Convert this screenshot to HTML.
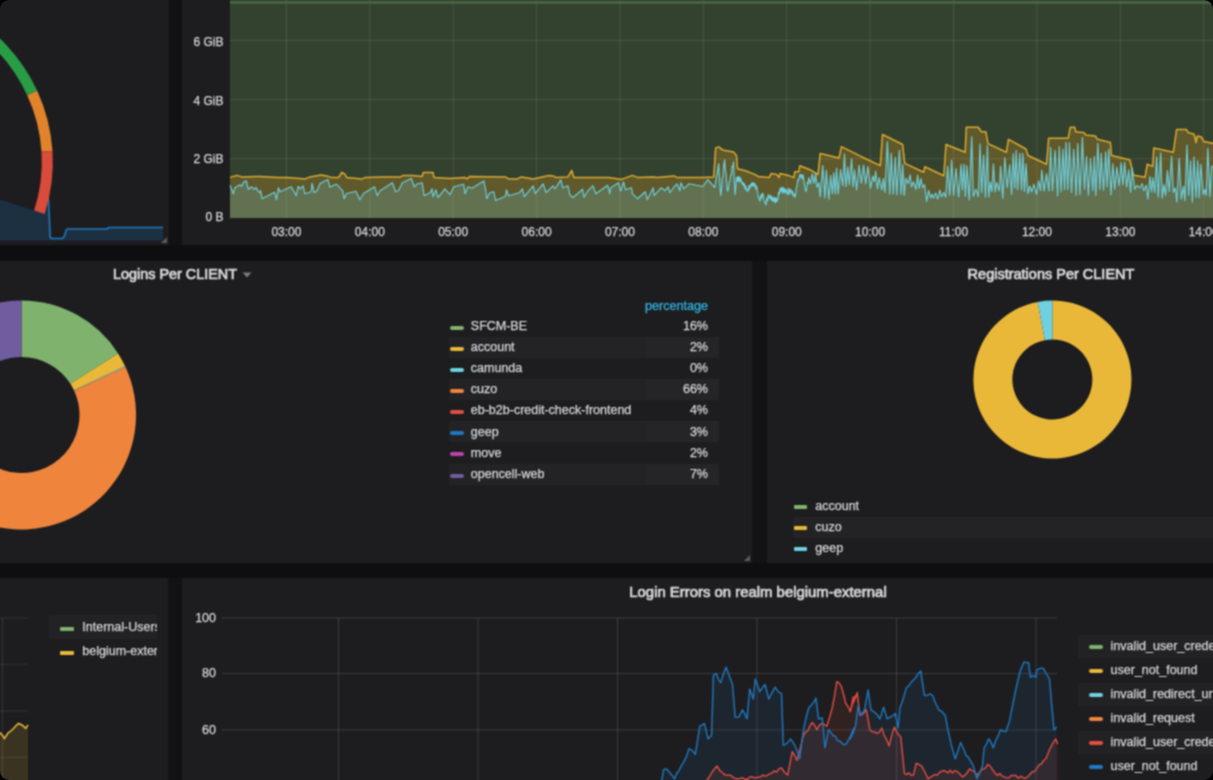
<!DOCTYPE html><html><head><meta charset="utf-8"><style>
html,body{margin:0;padding:0;background:#000;}
#o{position:absolute;left:0;top:0;width:1213px;height:780px;border-radius:9px;overflow:hidden;}
#c{position:absolute;left:0;top:0;width:1213px;height:780px;background:#0e0e10;overflow:hidden;font-family:'Liberation Sans',sans-serif;color:#d8d9da;filter:url(#bl);}
.p{position:absolute;background:#1d1d1f;}
.t{position:absolute;white-space:nowrap;-webkit-text-stroke:0.25px currentColor;}
svg{position:absolute;left:0;top:0;}
</style></head><body><svg width="0" height="0" style="position:absolute"><filter id="bl" x="0" y="0" width="1213" height="780" color-interpolation-filters="sRGB" filterUnits="userSpaceOnUse"><feConvolveMatrix order="3" kernelMatrix="1 2 1 2 4 2 1 2 1" divisor="16" edgeMode="duplicate"/></filter></svg><div id="o"><div id="c">
<div class="p" style="background:#121214;left:169px;top:-10px;width:13px;height:255px"></div>
<div class="p" style="background:#121214;left:752px;top:261px;width:15px;height:302px"></div>
<div class="p" style="background:#121214;left:168px;top:578px;width:14px;height:212px"></div>
<div class="p" style="left:0px;top:-10px;width:169px;height:255px"></div>
<div class="p" style="left:182px;top:-10px;width:1041px;height:255px"></div>
<div class="p" style="left:-10px;top:261px;width:762px;height:302px"></div>
<div class="p" style="left:767px;top:261px;width:456px;height:302px"></div>
<div class="p" style="left:-10px;top:578px;width:178px;height:212px"></div>
<div class="p" style="left:182px;top:578px;width:1041px;height:212px"></div>
<svg width="1213" height="780" viewBox="0 0 1213 780"><polygon points="0,194.5 47,194.5 48.5,200 50.2,237.5 51.5,238.5 62.5,238.5 64.5,236 66.5,229.5 68,229 107,229 109,227.5 163,227.5 163,240.5 0,240.5" fill="#1f78c1" fill-opacity="0.22"/><polyline points="0,194.5 47,194.5 48.5,200 50.2,237.5 51.5,238.5 62.5,238.5 64.5,236 66.5,229.5 68,229 107,229 109,227.5 163,227.5" fill="none" stroke="#1f78c1" stroke-width="1.6" stroke-linejoin="round"/><path d="M-117.7,161.9 L-117.7,2.4 A159.5,159.5 0 0 1 34.2,210.7 Z" fill="#1d1d1f"/><path d="M-146.4,-0.6 A165.0,165.0 0 0 1 32.2,93" fill="none" stroke="#299c46" stroke-width="11"/><path d="M32.2,93 A165.0,165.0 0 0 1 47,151.4" fill="none" stroke="#e0832a" stroke-width="11"/><path d="M47,151.4 A165.0,165.0 0 0 1 39.4,212.3" fill="none" stroke="#d94b3a" stroke-width="11"/><path d="M167,243 l0,-6 l-6,6 z" fill="#5c5c5e"/><path d="M750,561 l0,-6 l-6,6 z" fill="#5c5c5e"/><rect x="230" y="-10" width="993" height="228" fill="#33412f"/><line x1="286.4" y1="-10" x2="286.4" y2="218" stroke="#ffffff" stroke-opacity="0.11" stroke-width="1"/><line x1="369.8" y1="-10" x2="369.8" y2="218" stroke="#ffffff" stroke-opacity="0.11" stroke-width="1"/><line x1="453.2" y1="-10" x2="453.2" y2="218" stroke="#ffffff" stroke-opacity="0.11" stroke-width="1"/><line x1="536.6" y1="-10" x2="536.6" y2="218" stroke="#ffffff" stroke-opacity="0.11" stroke-width="1"/><line x1="620" y1="-10" x2="620" y2="218" stroke="#ffffff" stroke-opacity="0.11" stroke-width="1"/><line x1="703.3" y1="-10" x2="703.3" y2="218" stroke="#ffffff" stroke-opacity="0.11" stroke-width="1"/><line x1="786.7" y1="-10" x2="786.7" y2="218" stroke="#ffffff" stroke-opacity="0.11" stroke-width="1"/><line x1="870.1" y1="-10" x2="870.1" y2="218" stroke="#ffffff" stroke-opacity="0.11" stroke-width="1"/><line x1="953.5" y1="-10" x2="953.5" y2="218" stroke="#ffffff" stroke-opacity="0.11" stroke-width="1"/><line x1="1036.9" y1="-10" x2="1036.9" y2="218" stroke="#ffffff" stroke-opacity="0.11" stroke-width="1"/><line x1="1120.3" y1="-10" x2="1120.3" y2="218" stroke="#ffffff" stroke-opacity="0.11" stroke-width="1"/><line x1="1203.7" y1="-10" x2="1203.7" y2="218" stroke="#ffffff" stroke-opacity="0.11" stroke-width="1"/><line x1="230" y1="40.5" x2="1213" y2="40.5" stroke="#ffffff" stroke-opacity="0.11" stroke-width="1"/><line x1="230" y1="99.6" x2="1213" y2="99.6" stroke="#ffffff" stroke-opacity="0.11" stroke-width="1"/><line x1="230" y1="158.8" x2="1213" y2="158.8" stroke="#ffffff" stroke-opacity="0.11" stroke-width="1"/><line x1="230" y1="2.5" x2="1213" y2="2.5" stroke="#4f7047" stroke-width="2"/><polygon points="230,177.4 236.9,175.4 241.8,176.9 260.6,176.4 277.5,177.4 287.3,177.4 305.2,178.9 310.1,176.9 321,174.9 326.9,175.9 330.9,177.4 338.8,177.4 341.7,172.5 344.7,173.9 346.7,177.4 347,177.4 361.8,178.9 365.8,177.4 380.6,176.9 400.4,176.9 403.4,175.4 412.3,175.4 422.2,176.4 423.2,172.5 433,172.5 434,177.4 449.9,178.4 464.7,177.4 467,178.9 469.9,176.4 505.5,176.9 508.5,178.9 517.4,178.9 521.4,176.9 533.2,178.9 549.1,175.4 553,175.9 556,177.4 567.9,176.9 571.8,170.5 573.8,177.4 582.7,177.4 584,177.4 608.7,177.4 621.6,179.4 632.4,175.4 637.4,177.4 653.2,176.9 657.2,177.4 674,175.9 677,177.4 702,177.4 713.7,177.1 715.7,147.9 718.7,146.9 722.6,149.9 733.5,151.9 736.5,155.8 737.5,168.7 745.4,170.7 755.3,174.6 758.2,176.6 769.1,177.6 771.1,173.6 777,174.6 779,177.6 780,173.6 788.9,175.6 793.9,177.6 794.8,171.7 798.8,171.7 799.8,165.7 810,169.7 818,174.5 820.2,153.4 839.1,157.9 841.4,146.7 861.4,156.7 880.3,165.6 882.5,134.5 902.6,144.5 904.8,163.4 923.7,172.3 924.8,166.8 943.8,175.7 946,144.5 965.2,152.3 966.3,127.3 978.2,127.3 981.4,131.7 985.8,131.7 988,143.6 1006.4,152.3 1008.5,139.3 1025.9,149 1028.1,155.5 1046.5,164.2 1048.7,138.2 1068.2,138.2 1070.3,127.3 1074.7,127.3 1075.8,131.7 1084.4,132.8 1085.5,134.9 1095.3,136 1097.4,139.3 1110.4,142.5 1111.5,155.5 1130,159.9 1133.2,175 1145.1,177.2 1147.3,164.2 1152.7,166.4 1153.8,147.9 1173.3,152.3 1176.6,129.5 1186.3,129.5 1188.5,132.8 1193.9,133.9 1196.1,142.5 1197.2,136 1201.5,137.1 1203.7,141.4 1214,143.6 1214,218 230,218" fill="#f0a820" fill-opacity="0.24"/><polygon points="230,185.3 233.4,193.7 234.9,187.8 239.9,184.8 241.8,186.3 243.8,181.8 246.3,180.9 248.3,189.3 251.7,186.8 254.2,189.3 256.2,187.3 257.7,190.7 259.7,192.7 260.6,190.7 262.1,198.7 274.5,192.2 276.5,199.7 278.4,187.8 279.9,191.7 291.3,186.8 296.2,195.7 298.2,186.3 300.2,188.8 303.2,185.8 304.7,193.7 311.1,191.7 312.1,183.3 314.1,192.7 317,190.7 320,183.8 323.9,181.4 327.9,179.4 329.9,187.3 332.8,185.8 335.8,184.3 337.8,185.3 339.8,187.8 342.7,190.7 344.2,198.7 346,194.7 346.2,193.7 355.9,191.2 359.8,199.7 363.8,193.2 374.7,186.8 377.2,195.7 380.1,190.7 392.5,182.8 395.5,191.7 398.4,190.7 402.4,182.8 411.3,178.4 414.2,186.8 417.2,183.8 422.2,182.8 424.1,195.7 430.1,192.7 432.1,188.8 433,196.7 436,189.8 438,197.7 444.9,188.8 449.9,194.7 453.8,186.8 463.7,184.3 465,193.7 468,186.8 471.9,188.3 483.8,180.9 485.8,190.7 486.7,198.7 489.7,192.7 493.7,191.7 495.7,200.6 505.5,196.2 506.5,189.8 508.5,195.7 519.4,192.7 522.4,188.8 524.3,196.7 533.2,185.8 535.2,193.7 543.1,183.8 546.1,192.7 553,185.8 555,188.8 560.9,179.9 562.9,187.8 567.9,185.8 569.8,194.7 572.8,197.7 582.7,189.3 584,197.2 587.9,190.7 592.9,185.8 595.8,193.7 607.7,185.3 609.7,193.7 610.7,187.8 618.6,182.8 620.6,191.2 623.5,181.8 625.5,189.8 631.5,187.8 632.4,193.7 637.4,198.7 645.3,191.7 647.3,199.7 653.2,187.8 654.2,195.7 661.1,187.8 665.1,190.7 668.1,186.8 670,192.7 674,186.8 677,183.8 679.9,190.7 680.9,182.8 683.9,188.8 688.8,183.8 702.9,186.5 707.8,179.6 714.7,187.5 718.7,163.7 719.7,181.5 720.7,195.4 721.5,189.8 722.2,178.6 723,175.4 723.8,164.6 724.6,159.8 725.4,169.7 726.1,174.2 726.8,185.8 727.6,191.4 728.3,189.1 729.1,181.9 729.8,181.7 730.6,175.1 731.3,175 732,166.3 732.8,167 733.5,161.8 734.3,179.8 735,194.4 735.7,188.5 736.5,177.6 737.2,181.3 737.9,176.3 738.6,181.3 739.3,176.7 740,181.8 740.7,178 741.4,181.5 742.2,184.4 742.9,182 743.7,186 744.4,183.6 745.1,189.3 745.9,185.9 746.6,190.9 747.4,189.5 748.1,191.1 748.9,185.7 749.6,189.2 750.3,184.6 751.1,186.5 751.8,182.6 752.6,186 753.3,182.5 754.1,186 754.9,183.4 755.7,189.1 756.5,185.9 757.3,189.5 758.2,196.3 759.2,199.3 760,201.2 760.8,194.7 761.6,198.1 762.4,193 763.2,194.4 764.2,201.1 765.2,203.3 766,204.9 766.8,197.9 767.5,201 768.3,194.6 769.1,196.4 769.8,198.3 770.6,195.2 771.3,200.5 772,196.6 772.7,200.8 773.4,197.7 774.2,202.1 774.9,197.2 775.6,202.8 776.3,197.9 777,201.3 777.8,200 778.5,192.3 779.3,194.1 780,188.5 780.8,191.3 781.5,187.2 782.3,192.7 783.1,187.1 783.9,192.9 784.6,188.5 785.4,192.9 786.2,189.4 786.9,192.4 787.7,194.6 788.5,188.4 789.3,194.1 790.1,189 790.9,190.4 791.7,193.9 792.5,190.7 793.3,195.9 794.1,193.8 794.8,197.4 795.6,194.5 796.3,187 797.1,185.4 797.8,179.6 798.8,179.8 799.8,174.6 800.6,176.9 801.4,174.4 802.2,179 803,174.8 803.7,178.6 804.7,186.4 805.7,191.4 806.5,190.1 807.2,182.2 808,184 808.7,177.6 810.5,183.9 812.3,173.9 814.1,183.4 815.6,173.6 817.2,187.4 818.9,182.7 820.2,196.6 822.7,165.5 824.9,197.9 826.3,170.4 828.8,199.3 830.6,175.4 832.4,193.7 833.8,172.5 835.3,193.9 836.6,168.4 838.1,193.9 840.6,169.5 842.7,185.7 844.5,154.1 845.9,186.5 847.8,166.9 849.3,184.7 851.6,158.8 853.1,186.6 854.6,169.8 856.6,190 859.1,165.2 861.3,183.3 863.6,165.1 865.6,183.6 867.9,166.6 870.5,188.1 872.8,176.1 874.4,181.6 875.7,171.1 877.4,188.8 879.2,177.6 881.8,190 883.3,178.5 884.9,192.3 887.4,141.8 889.8,194.1 891.2,153.2 893.4,194 895.3,157.6 896.8,194.7 899.4,150.3 901.2,194.5 902.7,164.7 904.2,195.4 905.7,178.2 908,183.6 910.1,174.9 911.5,186.9 913.5,181.7 916,189.5 917.6,175.1 919.2,188.4 920.9,178.6 922.7,187.5 924.6,184.7 926.7,201.5 928.6,190.3 930.6,197.8 932.1,194.1 933.5,198.2 935.7,192.9 937.7,199.1 940,190 941.5,197 943.8,192.6 945.7,197.3 947.6,166.3 949.7,195.3 951.6,160.2 953.6,195.2 956,168.6 958.6,196.9 961,164.6 962.4,189.8 964,164.2 965.4,196.2 966.9,165.5 969.2,199.9 971.7,136.7 973.3,196.6 975.9,189.1 978.3,196.6 980,143.8 981.6,192.4 983.6,155 985.5,197.1 987.4,145.7 988.8,196.9 990.3,182 991.9,191.6 993.4,163.9 995.2,191.8 996.7,182.4 999.2,190.9 1000.6,166.1 1002.8,198.1 1004.9,157.7 1007.2,187.5 1009.7,164.8 1011.6,194.4 1013.2,153.9 1014.7,187.9 1016.2,150.6 1017.5,189.4 1019.8,153.3 1021.5,189.8 1022.8,153.4 1024.5,191.4 1026,163.9 1027.9,193.6 1029.8,186 1031.7,191.8 1033.9,184.2 1036.5,194.4 1038.6,180.8 1040.5,190.7 1041.8,170.2 1044.1,191.1 1046.5,173.7 1048.9,190.8 1050.6,147.3 1052.5,190.6 1055.1,150.2 1057.6,195.8 1059.3,146.6 1061.1,191.6 1063,149.1 1064.6,189.6 1066,142.3 1067.8,189.6 1069.4,142.6 1071.5,192.4 1073.7,149.3 1076.2,195.3 1077.7,143.6 1079.9,194.4 1082.4,137.3 1084.5,189.2 1086.5,156.5 1088.4,195 1090.5,158.5 1092.9,190.5 1094.3,156.4 1095.8,195.6 1097.8,143.2 1099.9,189.3 1101.2,153.4 1103.5,190.2 1105.7,151.9 1107.1,187 1108.7,149.2 1111,194.8 1112.9,163.7 1114.7,189.5 1116.8,167.1 1119,185.8 1121.2,162.7 1122.9,184.7 1124.6,162.3 1126.7,186.9 1128.7,169.9 1130.6,192.1 1132.2,168 1134.7,189.1 1137.1,185.3 1139.7,187.8 1142.2,183.7 1143.8,190.8 1146.3,185.3 1147.8,199 1150,176.5 1151.6,191.9 1152.9,177.7 1154.8,192.6 1156.6,157 1158.3,197.2 1160.7,152.9 1162.2,198.2 1163.8,184.5 1165.6,195.4 1167.4,170.5 1169.2,191.3 1171.6,156.2 1173.3,192.3 1175.3,187.9 1176.8,202 1179.2,158.4 1181.3,199.1 1183.5,186.3 1184.9,200.6 1187,145.2 1188.7,195.4 1190.6,160.9 1192.4,201.9 1194,156.8 1196.1,197.1 1197.7,160.7 1199.2,197.8 1200.8,164.1 1203.2,194.7 1204.8,189.5 1206.2,195.3 1207.8,148.3 1209.9,196.5 1211.7,166.2 1214,166.2 1214,218 230,218" fill="#6ed0e0" fill-opacity="0.2"/><polyline points="230,177.4 236.9,175.4 241.8,176.9 260.6,176.4 277.5,177.4 287.3,177.4 305.2,178.9 310.1,176.9 321,174.9 326.9,175.9 330.9,177.4 338.8,177.4 341.7,172.5 344.7,173.9 346.7,177.4 347,177.4 361.8,178.9 365.8,177.4 380.6,176.9 400.4,176.9 403.4,175.4 412.3,175.4 422.2,176.4 423.2,172.5 433,172.5 434,177.4 449.9,178.4 464.7,177.4 467,178.9 469.9,176.4 505.5,176.9 508.5,178.9 517.4,178.9 521.4,176.9 533.2,178.9 549.1,175.4 553,175.9 556,177.4 567.9,176.9 571.8,170.5 573.8,177.4 582.7,177.4 584,177.4 608.7,177.4 621.6,179.4 632.4,175.4 637.4,177.4 653.2,176.9 657.2,177.4 674,175.9 677,177.4 702,177.4 713.7,177.1 715.7,147.9 718.7,146.9 722.6,149.9 733.5,151.9 736.5,155.8 737.5,168.7 745.4,170.7 755.3,174.6 758.2,176.6 769.1,177.6 771.1,173.6 777,174.6 779,177.6 780,173.6 788.9,175.6 793.9,177.6 794.8,171.7 798.8,171.7 799.8,165.7 810,169.7 818,174.5 820.2,153.4 839.1,157.9 841.4,146.7 861.4,156.7 880.3,165.6 882.5,134.5 902.6,144.5 904.8,163.4 923.7,172.3 924.8,166.8 943.8,175.7 946,144.5 965.2,152.3 966.3,127.3 978.2,127.3 981.4,131.7 985.8,131.7 988,143.6 1006.4,152.3 1008.5,139.3 1025.9,149 1028.1,155.5 1046.5,164.2 1048.7,138.2 1068.2,138.2 1070.3,127.3 1074.7,127.3 1075.8,131.7 1084.4,132.8 1085.5,134.9 1095.3,136 1097.4,139.3 1110.4,142.5 1111.5,155.5 1130,159.9 1133.2,175 1145.1,177.2 1147.3,164.2 1152.7,166.4 1153.8,147.9 1173.3,152.3 1176.6,129.5 1186.3,129.5 1188.5,132.8 1193.9,133.9 1196.1,142.5 1197.2,136 1201.5,137.1 1203.7,141.4 1214,143.6" fill="none" stroke="#dcaa30" stroke-width="1.5" stroke-linejoin="round"/><polyline points="230,185.3 233.4,193.7 234.9,187.8 239.9,184.8 241.8,186.3 243.8,181.8 246.3,180.9 248.3,189.3 251.7,186.8 254.2,189.3 256.2,187.3 257.7,190.7 259.7,192.7 260.6,190.7 262.1,198.7 274.5,192.2 276.5,199.7 278.4,187.8 279.9,191.7 291.3,186.8 296.2,195.7 298.2,186.3 300.2,188.8 303.2,185.8 304.7,193.7 311.1,191.7 312.1,183.3 314.1,192.7 317,190.7 320,183.8 323.9,181.4 327.9,179.4 329.9,187.3 332.8,185.8 335.8,184.3 337.8,185.3 339.8,187.8 342.7,190.7 344.2,198.7 346,194.7 346.2,193.7 355.9,191.2 359.8,199.7 363.8,193.2 374.7,186.8 377.2,195.7 380.1,190.7 392.5,182.8 395.5,191.7 398.4,190.7 402.4,182.8 411.3,178.4 414.2,186.8 417.2,183.8 422.2,182.8 424.1,195.7 430.1,192.7 432.1,188.8 433,196.7 436,189.8 438,197.7 444.9,188.8 449.9,194.7 453.8,186.8 463.7,184.3 465,193.7 468,186.8 471.9,188.3 483.8,180.9 485.8,190.7 486.7,198.7 489.7,192.7 493.7,191.7 495.7,200.6 505.5,196.2 506.5,189.8 508.5,195.7 519.4,192.7 522.4,188.8 524.3,196.7 533.2,185.8 535.2,193.7 543.1,183.8 546.1,192.7 553,185.8 555,188.8 560.9,179.9 562.9,187.8 567.9,185.8 569.8,194.7 572.8,197.7 582.7,189.3 584,197.2 587.9,190.7 592.9,185.8 595.8,193.7 607.7,185.3 609.7,193.7 610.7,187.8 618.6,182.8 620.6,191.2 623.5,181.8 625.5,189.8 631.5,187.8 632.4,193.7 637.4,198.7 645.3,191.7 647.3,199.7 653.2,187.8 654.2,195.7 661.1,187.8 665.1,190.7 668.1,186.8 670,192.7 674,186.8 677,183.8 679.9,190.7 680.9,182.8 683.9,188.8 688.8,183.8 702.9,186.5 707.8,179.6 714.7,187.5 718.7,163.7 719.7,181.5 720.7,195.4 721.5,189.8 722.2,178.6 723,175.4 723.8,164.6 724.6,159.8 725.4,169.7 726.1,174.2 726.8,185.8 727.6,191.4 728.3,189.1 729.1,181.9 729.8,181.7 730.6,175.1 731.3,175 732,166.3 732.8,167 733.5,161.8 734.3,179.8 735,194.4 735.7,188.5 736.5,177.6 737.2,181.3 737.9,176.3 738.6,181.3 739.3,176.7 740,181.8 740.7,178 741.4,181.5 742.2,184.4 742.9,182 743.7,186 744.4,183.6 745.1,189.3 745.9,185.9 746.6,190.9 747.4,189.5 748.1,191.1 748.9,185.7 749.6,189.2 750.3,184.6 751.1,186.5 751.8,182.6 752.6,186 753.3,182.5 754.1,186 754.9,183.4 755.7,189.1 756.5,185.9 757.3,189.5 758.2,196.3 759.2,199.3 760,201.2 760.8,194.7 761.6,198.1 762.4,193 763.2,194.4 764.2,201.1 765.2,203.3 766,204.9 766.8,197.9 767.5,201 768.3,194.6 769.1,196.4 769.8,198.3 770.6,195.2 771.3,200.5 772,196.6 772.7,200.8 773.4,197.7 774.2,202.1 774.9,197.2 775.6,202.8 776.3,197.9 777,201.3 777.8,200 778.5,192.3 779.3,194.1 780,188.5 780.8,191.3 781.5,187.2 782.3,192.7 783.1,187.1 783.9,192.9 784.6,188.5 785.4,192.9 786.2,189.4 786.9,192.4 787.7,194.6 788.5,188.4 789.3,194.1 790.1,189 790.9,190.4 791.7,193.9 792.5,190.7 793.3,195.9 794.1,193.8 794.8,197.4 795.6,194.5 796.3,187 797.1,185.4 797.8,179.6 798.8,179.8 799.8,174.6 800.6,176.9 801.4,174.4 802.2,179 803,174.8 803.7,178.6 804.7,186.4 805.7,191.4 806.5,190.1 807.2,182.2 808,184 808.7,177.6 810.5,183.9 812.3,173.9 814.1,183.4 815.6,173.6 817.2,187.4 818.9,182.7 820.2,196.6 822.7,165.5 824.9,197.9 826.3,170.4 828.8,199.3 830.6,175.4 832.4,193.7 833.8,172.5 835.3,193.9 836.6,168.4 838.1,193.9 840.6,169.5 842.7,185.7 844.5,154.1 845.9,186.5 847.8,166.9 849.3,184.7 851.6,158.8 853.1,186.6 854.6,169.8 856.6,190 859.1,165.2 861.3,183.3 863.6,165.1 865.6,183.6 867.9,166.6 870.5,188.1 872.8,176.1 874.4,181.6 875.7,171.1 877.4,188.8 879.2,177.6 881.8,190 883.3,178.5 884.9,192.3 887.4,141.8 889.8,194.1 891.2,153.2 893.4,194 895.3,157.6 896.8,194.7 899.4,150.3 901.2,194.5 902.7,164.7 904.2,195.4 905.7,178.2 908,183.6 910.1,174.9 911.5,186.9 913.5,181.7 916,189.5 917.6,175.1 919.2,188.4 920.9,178.6 922.7,187.5 924.6,184.7 926.7,201.5 928.6,190.3 930.6,197.8 932.1,194.1 933.5,198.2 935.7,192.9 937.7,199.1 940,190 941.5,197 943.8,192.6 945.7,197.3 947.6,166.3 949.7,195.3 951.6,160.2 953.6,195.2 956,168.6 958.6,196.9 961,164.6 962.4,189.8 964,164.2 965.4,196.2 966.9,165.5 969.2,199.9 971.7,136.7 973.3,196.6 975.9,189.1 978.3,196.6 980,143.8 981.6,192.4 983.6,155 985.5,197.1 987.4,145.7 988.8,196.9 990.3,182 991.9,191.6 993.4,163.9 995.2,191.8 996.7,182.4 999.2,190.9 1000.6,166.1 1002.8,198.1 1004.9,157.7 1007.2,187.5 1009.7,164.8 1011.6,194.4 1013.2,153.9 1014.7,187.9 1016.2,150.6 1017.5,189.4 1019.8,153.3 1021.5,189.8 1022.8,153.4 1024.5,191.4 1026,163.9 1027.9,193.6 1029.8,186 1031.7,191.8 1033.9,184.2 1036.5,194.4 1038.6,180.8 1040.5,190.7 1041.8,170.2 1044.1,191.1 1046.5,173.7 1048.9,190.8 1050.6,147.3 1052.5,190.6 1055.1,150.2 1057.6,195.8 1059.3,146.6 1061.1,191.6 1063,149.1 1064.6,189.6 1066,142.3 1067.8,189.6 1069.4,142.6 1071.5,192.4 1073.7,149.3 1076.2,195.3 1077.7,143.6 1079.9,194.4 1082.4,137.3 1084.5,189.2 1086.5,156.5 1088.4,195 1090.5,158.5 1092.9,190.5 1094.3,156.4 1095.8,195.6 1097.8,143.2 1099.9,189.3 1101.2,153.4 1103.5,190.2 1105.7,151.9 1107.1,187 1108.7,149.2 1111,194.8 1112.9,163.7 1114.7,189.5 1116.8,167.1 1119,185.8 1121.2,162.7 1122.9,184.7 1124.6,162.3 1126.7,186.9 1128.7,169.9 1130.6,192.1 1132.2,168 1134.7,189.1 1137.1,185.3 1139.7,187.8 1142.2,183.7 1143.8,190.8 1146.3,185.3 1147.8,199 1150,176.5 1151.6,191.9 1152.9,177.7 1154.8,192.6 1156.6,157 1158.3,197.2 1160.7,152.9 1162.2,198.2 1163.8,184.5 1165.6,195.4 1167.4,170.5 1169.2,191.3 1171.6,156.2 1173.3,192.3 1175.3,187.9 1176.8,202 1179.2,158.4 1181.3,199.1 1183.5,186.3 1184.9,200.6 1187,145.2 1188.7,195.4 1190.6,160.9 1192.4,201.9 1194,156.8 1196.1,197.1 1197.7,160.7 1199.2,197.8 1200.8,164.1 1203.2,194.7 1204.8,189.5 1206.2,195.3 1207.8,148.3 1209.9,196.5 1211.7,166.2 1214,166.2" fill="none" stroke="#6ed0e0" stroke-width="1.15" stroke-linejoin="round"/><path d="M21.5,300.5 A114.5,114.5 0 0 1 118.1,353.5 L70.4,383.8 A58,58 0 0 0 21.5,357 Z" fill="#7eb26d"/><path d="M118.1,353.5 A114.5,114.5 0 0 1 125,366.1 L73.9,390.2 A58,58 0 0 0 70.4,383.8 Z" fill="#eab839"/><path d="M125,366.1 A114.5,114.5 0 0 1 125.5,367 L74.2,390.7 A58,58 0 0 0 73.9,390.2 Z" fill="#8fc9c9"/><path d="M125.5,367 A114.5,114.5 0 1 1 -75.1,353.5 L-27.4,383.8 A58,58 0 1 0 74.2,390.7 Z" fill="#ef843c"/><path d="M-75.1,353.5 A114.5,114.5 0 0 1 -56.8,331.4 L-18.2,372.7 A58,58 0 0 0 -27.4,383.8 Z" fill="#e24d42"/><path d="M-56.8,331.4 A114.5,114.5 0 0 1 -39.8,318.3 L-9.5,366 A58,58 0 0 0 -18.2,372.7 Z" fill="#1f78c1"/><path d="M-39.8,318.3 A114.5,114.5 0 0 1 -27.2,311.4 L-3.2,362.5 A58,58 0 0 0 -9.5,366 Z" fill="#ba43a9"/><path d="M-27.2,311.4 A114.5,114.5 0 0 1 21.5,300.5 L21.5,357 A58,58 0 0 0 -3.2,362.5 Z" fill="#705da0"/><path d="M1052.4,300.5 A79,79 0 0 1 1052.4,300.5 L1052.4,339.5 A40,40 0 0 0 1052.4,339.5 Z" fill="#7eb26d"/><path d="M1052.4,300.5 A79,79 0 1 1 1037.6,301.9 L1044.9,340.2 A40,40 0 1 0 1052.4,339.5 Z" fill="#eab839"/><path d="M1037.6,301.9 A79,79 0 0 1 1052.4,300.5 L1052.4,339.5 A40,40 0 0 0 1044.9,340.2 Z" fill="#6ed0e0"/><line x1="0" y1="618" x2="28" y2="618" stroke="#ffffff" stroke-opacity="0.1"/><line x1="0" y1="664.3" x2="28" y2="664.3" stroke="#ffffff" stroke-opacity="0.1"/><line x1="0" y1="711" x2="28" y2="711" stroke="#ffffff" stroke-opacity="0.1"/><line x1="0" y1="757.3" x2="28" y2="757.3" stroke="#ffffff" stroke-opacity="0.1"/><line x1="2.5" y1="618" x2="2.5" y2="790" stroke="#ffffff" stroke-opacity="0.1"/><polygon points="0,732.5 3,736 4.4,738.6 8,733 12,730 18.3,723.5 22,725 25.6,728.3 28,725 28,790 0,790" fill="#eab839" fill-opacity="0.15"/><polyline points="0,732.5 3,736 4.4,738.6 8,733 12,730 18.3,723.5 22,725 25.6,728.3 28,725" fill="none" stroke="#eab839" stroke-width="1.5"/><line x1="222" y1="618" x2="1057" y2="618" stroke="#ffffff" stroke-opacity="0.13"/><line x1="222" y1="673.5" x2="1057" y2="673.5" stroke="#ffffff" stroke-opacity="0.13"/><line x1="222" y1="730" x2="1057" y2="730" stroke="#ffffff" stroke-opacity="0.13"/><line x1="338.5" y1="618" x2="338.5" y2="790" stroke="#ffffff" stroke-opacity="0.13"/><line x1="478" y1="618" x2="478" y2="790" stroke="#ffffff" stroke-opacity="0.13"/><line x1="617.5" y1="618" x2="617.5" y2="790" stroke="#ffffff" stroke-opacity="0.13"/><line x1="757" y1="618" x2="757" y2="790" stroke="#ffffff" stroke-opacity="0.13"/><line x1="896.5" y1="618" x2="896.5" y2="790" stroke="#ffffff" stroke-opacity="0.13"/><line x1="1036" y1="618" x2="1036" y2="790" stroke="#ffffff" stroke-opacity="0.13"/><polygon points="660,790 663.6,769.7 666.3,768.8 669,771.7 671.7,774.9 674.5,778.8 676.7,773.3 679,770.6 681.3,765.8 683.5,762.4 686.2,757.1 689,748.8 692.1,750.4 695.3,754.3 697.6,740.2 699.8,726.2 702.1,725.2 704.4,723.4 708,738.9 711.6,735.2 713.4,675.4 716.2,673.6 718.4,679.3 720.7,682.6 723.4,674 726.1,667.2 729.8,677.2 732.5,684.5 735.2,717.1 738.8,717.1 742.5,709.8 744.7,713.6 747,718.9 749.7,689 753.3,699 755.2,679 757.4,684.6 759.7,691.7 762.4,687.8 765.1,684.5 768.8,699 771.9,692.9 775.1,687.2 778.3,691.8 781.5,693.5 783.3,745.2 785.7,744.2 788.1,742.2 790.5,738.9 794.2,744.3 796.9,750 799.6,758.8 803.2,731.6 805.9,718.3 808.7,708 811.1,705.4 813.5,702.7 815.9,698.1 818.6,718.9 822.3,718 825,747.9 828.6,729.8 830.9,732.4 833.1,735.5 835.4,736.4 837.7,740.7 840.4,741.5 843.1,744.5 845.8,744.3 848.6,739.9 851.3,734.6 854,728 850,738.9 852.7,734 855.4,726.2 858.2,706.2 860.9,715.3 864.5,709.8 868.1,689.9 870.9,709.8 873.1,711.3 875.4,713.1 877.7,715.5 879.9,718.9 883.6,707.1 887.2,718.9 889.9,717.2 892.6,715.9 895.3,713.5 898.1,728 899.9,708 903,699.5 906.2,688.1 908.9,685.6 911.7,681.7 913.9,679.5 916.2,677.1 918.5,673.4 920.7,670.9 924.4,695.3 927.1,695.5 929.8,693.9 932.5,695.3 935.7,703.5 938.9,709.8 942,711.7 945.2,715.3 948.4,732 951.6,746.1 955.2,758.8 957.9,751.1 960.6,742.5 963.3,748.2 966.1,755.2 968.5,757.6 970.9,761.6 973.3,766.1 976.9,778.8 979.7,772.9 982.4,766.1 984.2,747.9 986.5,744 988.7,738.9 991,742.2 993.3,747.9 995.7,740.5 998.1,735.9 1000.5,729.8 1003.2,731 1006,731.6 1009.6,720.7 1012.3,706.8 1015,693.5 1017.8,680.9 1020.5,669.9 1024.1,661.8 1026.4,662.6 1028.6,662.7 1030.4,677.2 1033.2,675.6 1035.9,677.2 1036.8,669.9 1040,668.4 1043.1,668.1 1046.3,673.5 1049.5,679 1051.8,705.9 1054,729.8 1056.7,727.1 1056.7,790 660,790" fill="#1f78c1" fill-opacity="0.1"/><polygon points="700,790 702.4,787.1 704.7,784.6 707.1,780 709.6,776.5 712.1,772.2 714.6,768.7 717.1,766.1 719.8,770.6 722.5,772.8 725.2,775.1 727.8,775.2 730.3,775.1 732.9,777.3 735.4,778.6 737.9,778.8 740.2,778.4 742.5,777.8 744.7,779 747,779.7 749.3,777.3 751.5,776.6 753.8,777.5 756.1,777.9 758.3,777 760.5,777.1 762.7,774.9 764.9,776.2 767.1,775.4 769.3,774 771.5,773.3 774,771 776.5,772.1 779,768.6 781.5,767.9 784.6,772.5 787.8,775.1 790.1,762.5 792.3,751.6 794.6,755.2 796.9,760.6 800,749.2 803.2,736.1 805.5,732.1 807.8,730.8 810,725.9 812.3,722.5 814.6,725.2 816.8,729.8 819.1,725.7 821.4,723.4 824.1,724.5 826.8,726.2 829.5,717.6 832.2,708 834.5,696.3 836.8,681.7 839,682.9 841.3,686.3 843.6,694.5 845.8,703.5 848.1,706.7 850.4,711.7 853.1,697.2 855.4,696.4 857.6,692.6 855.1,697.8 852.5,703.9 850,711.7 852.4,704.2 854.8,699.2 857.3,693.5 860,715.3 863.1,713.8 866.3,709.8 869.9,729.8 872.2,731.7 874.5,731.9 876.8,733.4 879,732.5 881.7,728 884.2,735.4 886.6,739.5 889,746.1 891.7,735.6 894.4,727.1 897.6,733.5 900.8,737.1 904.4,773.3 906.7,774.6 908.9,772.7 911.2,775.2 913.5,775.1 916.2,763.3 918.9,764.3 921.6,766.1 924.8,772 928,778.8 930.3,777.3 932.5,775.9 934.8,774.5 937.1,775.1 940.7,771.5 943,770.8 945.3,771 947.7,773 950,770.3 952.3,773 954.7,770.6 957,771.5 959.7,773.8 962.4,776.9 964.9,775.3 967.3,772.5 969.7,768.8 972.1,770.7 974.5,771.6 976.9,775.1 979.7,772.3 982.4,769.3 985.1,768.3 987.8,764.3 990.2,766.3 992.7,769.9 995.1,773.3 997.4,775.5 999.6,773.6 1001.9,775.8 1004.2,776.9 1006.5,777.9 1008.9,777.8 1011.2,775.5 1013.6,775.5 1015.9,775.5 1018.3,778.3 1020.7,776.2 1023,777.7 1025.4,778.2 1027.7,776.9 1030,774.2 1032.3,771.7 1034.5,771.6 1036.8,768.3 1039.1,764.9 1041.3,764 1043.6,760.5 1045.9,758.8 1049.5,749.7 1052.7,743.6 1055.8,738.9 1057.7,744.3 1057.7,790 700,790" fill="#e24d42" fill-opacity="0.1"/><polyline points="700,790 702.4,787.1 704.7,784.6 707.1,780 709.6,776.5 712.1,772.2 714.6,768.7 717.1,766.1 719.8,770.6 722.5,772.8 725.2,775.1 727.8,775.2 730.3,775.1 732.9,777.3 735.4,778.6 737.9,778.8 740.2,778.4 742.5,777.8 744.7,779 747,779.7 749.3,777.3 751.5,776.6 753.8,777.5 756.1,777.9 758.3,777 760.5,777.1 762.7,774.9 764.9,776.2 767.1,775.4 769.3,774 771.5,773.3 774,771 776.5,772.1 779,768.6 781.5,767.9 784.6,772.5 787.8,775.1 790.1,762.5 792.3,751.6 794.6,755.2 796.9,760.6 800,749.2 803.2,736.1 805.5,732.1 807.8,730.8 810,725.9 812.3,722.5 814.6,725.2 816.8,729.8 819.1,725.7 821.4,723.4 824.1,724.5 826.8,726.2 829.5,717.6 832.2,708 834.5,696.3 836.8,681.7 839,682.9 841.3,686.3 843.6,694.5 845.8,703.5 848.1,706.7 850.4,711.7 853.1,697.2 855.4,696.4 857.6,692.6 855.1,697.8 852.5,703.9 850,711.7 852.4,704.2 854.8,699.2 857.3,693.5 860,715.3 863.1,713.8 866.3,709.8 869.9,729.8 872.2,731.7 874.5,731.9 876.8,733.4 879,732.5 881.7,728 884.2,735.4 886.6,739.5 889,746.1 891.7,735.6 894.4,727.1 897.6,733.5 900.8,737.1 904.4,773.3 906.7,774.6 908.9,772.7 911.2,775.2 913.5,775.1 916.2,763.3 918.9,764.3 921.6,766.1 924.8,772 928,778.8 930.3,777.3 932.5,775.9 934.8,774.5 937.1,775.1 940.7,771.5 943,770.8 945.3,771 947.7,773 950,770.3 952.3,773 954.7,770.6 957,771.5 959.7,773.8 962.4,776.9 964.9,775.3 967.3,772.5 969.7,768.8 972.1,770.7 974.5,771.6 976.9,775.1 979.7,772.3 982.4,769.3 985.1,768.3 987.8,764.3 990.2,766.3 992.7,769.9 995.1,773.3 997.4,775.5 999.6,773.6 1001.9,775.8 1004.2,776.9 1006.5,777.9 1008.9,777.8 1011.2,775.5 1013.6,775.5 1015.9,775.5 1018.3,778.3 1020.7,776.2 1023,777.7 1025.4,778.2 1027.7,776.9 1030,774.2 1032.3,771.7 1034.5,771.6 1036.8,768.3 1039.1,764.9 1041.3,764 1043.6,760.5 1045.9,758.8 1049.5,749.7 1052.7,743.6 1055.8,738.9 1057.7,744.3" fill="none" stroke="#e24d42" stroke-width="1.4" stroke-linejoin="round"/><polyline points="660,790 663.6,769.7 666.3,768.8 669,771.7 671.7,774.9 674.5,778.8 676.7,773.3 679,770.6 681.3,765.8 683.5,762.4 686.2,757.1 689,748.8 692.1,750.4 695.3,754.3 697.6,740.2 699.8,726.2 702.1,725.2 704.4,723.4 708,738.9 711.6,735.2 713.4,675.4 716.2,673.6 718.4,679.3 720.7,682.6 723.4,674 726.1,667.2 729.8,677.2 732.5,684.5 735.2,717.1 738.8,717.1 742.5,709.8 744.7,713.6 747,718.9 749.7,689 753.3,699 755.2,679 757.4,684.6 759.7,691.7 762.4,687.8 765.1,684.5 768.8,699 771.9,692.9 775.1,687.2 778.3,691.8 781.5,693.5 783.3,745.2 785.7,744.2 788.1,742.2 790.5,738.9 794.2,744.3 796.9,750 799.6,758.8 803.2,731.6 805.9,718.3 808.7,708 811.1,705.4 813.5,702.7 815.9,698.1 818.6,718.9 822.3,718 825,747.9 828.6,729.8 830.9,732.4 833.1,735.5 835.4,736.4 837.7,740.7 840.4,741.5 843.1,744.5 845.8,744.3 848.6,739.9 851.3,734.6 854,728 850,738.9 852.7,734 855.4,726.2 858.2,706.2 860.9,715.3 864.5,709.8 868.1,689.9 870.9,709.8 873.1,711.3 875.4,713.1 877.7,715.5 879.9,718.9 883.6,707.1 887.2,718.9 889.9,717.2 892.6,715.9 895.3,713.5 898.1,728 899.9,708 903,699.5 906.2,688.1 908.9,685.6 911.7,681.7 913.9,679.5 916.2,677.1 918.5,673.4 920.7,670.9 924.4,695.3 927.1,695.5 929.8,693.9 932.5,695.3 935.7,703.5 938.9,709.8 942,711.7 945.2,715.3 948.4,732 951.6,746.1 955.2,758.8 957.9,751.1 960.6,742.5 963.3,748.2 966.1,755.2 968.5,757.6 970.9,761.6 973.3,766.1 976.9,778.8 979.7,772.9 982.4,766.1 984.2,747.9 986.5,744 988.7,738.9 991,742.2 993.3,747.9 995.7,740.5 998.1,735.9 1000.5,729.8 1003.2,731 1006,731.6 1009.6,720.7 1012.3,706.8 1015,693.5 1017.8,680.9 1020.5,669.9 1024.1,661.8 1026.4,662.6 1028.6,662.7 1030.4,677.2 1033.2,675.6 1035.9,677.2 1036.8,669.9 1040,668.4 1043.1,668.1 1046.3,673.5 1049.5,679 1051.8,705.9 1054,729.8 1056.7,727.1" fill="none" stroke="#1f78c1" stroke-width="1.4" stroke-linejoin="round"/></svg>
<div class="t" style="right:989.5px;top:35.5px;font-size:12px;line-height:13.8px;color:#d8d9da;font-weight:normal;">6 GiB</div>
<div class="t" style="right:989.5px;top:94.5px;font-size:12px;line-height:13.8px;color:#d8d9da;font-weight:normal;">4 GiB</div>
<div class="t" style="right:989.5px;top:152.5px;font-size:12px;line-height:13.8px;color:#d8d9da;font-weight:normal;">2 GiB</div>
<div class="t" style="right:989.5px;top:210.5px;font-size:12px;line-height:13.8px;color:#d8d9da;font-weight:normal;">0 B</div>
<div class="t" style="left:-213.60000000000002px;width:1000px;text-align:center;top:225.5px;font-size:12px;line-height:13.8px;color:#d8d9da;font-weight:normal;">03:00</div>
<div class="t" style="left:-130.21000000000004px;width:1000px;text-align:center;top:225.5px;font-size:12px;line-height:13.8px;color:#d8d9da;font-weight:normal;">04:00</div>
<div class="t" style="left:-46.82000000000005px;width:1000px;text-align:center;top:225.5px;font-size:12px;line-height:13.8px;color:#d8d9da;font-weight:normal;">05:00</div>
<div class="t" style="left:36.569999999999936px;width:1000px;text-align:center;top:225.5px;font-size:12px;line-height:13.8px;color:#d8d9da;font-weight:normal;">06:00</div>
<div class="t" style="left:119.96000000000004px;width:1000px;text-align:center;top:225.5px;font-size:12px;line-height:13.8px;color:#d8d9da;font-weight:normal;">07:00</div>
<div class="t" style="left:203.3499999999999px;width:1000px;text-align:center;top:225.5px;font-size:12px;line-height:13.8px;color:#d8d9da;font-weight:normal;">08:00</div>
<div class="t" style="left:286.74px;width:1000px;text-align:center;top:225.5px;font-size:12px;line-height:13.8px;color:#d8d9da;font-weight:normal;">09:00</div>
<div class="t" style="left:370.13px;width:1000px;text-align:center;top:225.5px;font-size:12px;line-height:13.8px;color:#d8d9da;font-weight:normal;">10:00</div>
<div class="t" style="left:453.52px;width:1000px;text-align:center;top:225.5px;font-size:12px;line-height:13.8px;color:#d8d9da;font-weight:normal;">11:00</div>
<div class="t" style="left:536.9099999999999px;width:1000px;text-align:center;top:225.5px;font-size:12px;line-height:13.8px;color:#d8d9da;font-weight:normal;">12:00</div>
<div class="t" style="left:620.3px;width:1000px;text-align:center;top:225.5px;font-size:12px;line-height:13.8px;color:#d8d9da;font-weight:normal;">13:00</div>
<div class="t" style="left:703.69px;width:1000px;text-align:center;top:225.5px;font-size:12px;line-height:13.8px;color:#d8d9da;font-weight:normal;">14:00</div>
<div class="t" style="left:-325px;width:1000px;text-align:center;top:265.6px;font-size:14.4px;line-height:16.6px;color:#d8d9da;font-weight:normal;-webkit-text-stroke:0.7px #d8d9da">Logins Per CLIENT</div>
<svg style="left:242px;top:272px" width="10" height="6"><path d="M0.5,0.5 L9.5,0.5 L5,5.5 Z" fill="#7b7b7d"/></svg>
<div class="t" style="right:505px;top:298.7px;font-size:12.6px;line-height:14.5px;color:#33b5e5;font-weight:normal;">percentage</div>
<div class="p" style="background:#7eb26d;left:450px;top:325.5px;width:13.5px;height:4px;border-radius:2px"></div>
<div class="t" style="left:470.8px;top:318.8px;font-size:12.5px;line-height:14.4px;color:#d8d9da;font-weight:normal;">SFCM-BE</div>
<div class="t" style="right:505px;top:318.8px;font-size:12.5px;line-height:14.4px;color:#d8d9da;font-weight:normal;">16%</div>
<div class="p" style="background:#232325;left:449px;top:336.6px;width:197px;height:21px"></div><div class="p" style="background:#252527;left:646px;top:336.6px;width:73px;height:21px"></div>
<div class="p" style="background:#eab839;left:450px;top:346.6px;width:13.5px;height:4px;border-radius:2px"></div>
<div class="t" style="left:470.8px;top:339.9px;font-size:12.5px;line-height:14.4px;color:#d8d9da;font-weight:normal;">account</div>
<div class="t" style="right:505px;top:339.9px;font-size:12.5px;line-height:14.4px;color:#d8d9da;font-weight:normal;">2%</div>
<div class="p" style="background:#6ed0e0;left:450px;top:367.8px;width:13.5px;height:4px;border-radius:2px"></div>
<div class="t" style="left:470.8px;top:361.1px;font-size:12.5px;line-height:14.4px;color:#d8d9da;font-weight:normal;">camunda</div>
<div class="t" style="right:505px;top:361.1px;font-size:12.5px;line-height:14.4px;color:#d8d9da;font-weight:normal;">0%</div>
<div class="p" style="background:#232325;left:449px;top:378.9px;width:197px;height:21px"></div><div class="p" style="background:#252527;left:646px;top:378.9px;width:73px;height:21px"></div>
<div class="p" style="background:#ef843c;left:450px;top:388.9px;width:13.5px;height:4px;border-radius:2px"></div>
<div class="t" style="left:470.8px;top:382.2px;font-size:12.5px;line-height:14.4px;color:#d8d9da;font-weight:normal;">cuzo</div>
<div class="t" style="right:505px;top:382.2px;font-size:12.5px;line-height:14.4px;color:#d8d9da;font-weight:normal;">66%</div>
<div class="p" style="background:#e24d42;left:450px;top:410.1px;width:13.5px;height:4px;border-radius:2px"></div>
<div class="t" style="left:470.8px;top:403.4px;font-size:12.5px;line-height:14.4px;color:#d8d9da;font-weight:normal;">eb-b2b-credit-check-frontend</div>
<div class="t" style="right:505px;top:403.4px;font-size:12.5px;line-height:14.4px;color:#d8d9da;font-weight:normal;">4%</div>
<div class="p" style="background:#232325;left:449px;top:421.2px;width:197px;height:21px"></div><div class="p" style="background:#252527;left:646px;top:421.2px;width:73px;height:21px"></div>
<div class="p" style="background:#1f78c1;left:450px;top:431.2px;width:13.5px;height:4px;border-radius:2px"></div>
<div class="t" style="left:470.8px;top:424.5px;font-size:12.5px;line-height:14.4px;color:#d8d9da;font-weight:normal;">geep</div>
<div class="t" style="right:505px;top:424.5px;font-size:12.5px;line-height:14.4px;color:#d8d9da;font-weight:normal;">3%</div>
<div class="p" style="background:#ba43a9;left:450px;top:452.4px;width:13.5px;height:4px;border-radius:2px"></div>
<div class="t" style="left:470.8px;top:445.6px;font-size:12.5px;line-height:14.4px;color:#d8d9da;font-weight:normal;">move</div>
<div class="t" style="right:505px;top:445.6px;font-size:12.5px;line-height:14.4px;color:#d8d9da;font-weight:normal;">2%</div>
<div class="p" style="background:#232325;left:449px;top:463.5px;width:197px;height:21px"></div><div class="p" style="background:#252527;left:646px;top:463.5px;width:73px;height:21px"></div>
<div class="p" style="background:#705da0;left:450px;top:473.5px;width:13.5px;height:4px;border-radius:2px"></div>
<div class="t" style="left:470.8px;top:466.8px;font-size:12.5px;line-height:14.4px;color:#d8d9da;font-weight:normal;">opencell-web</div>
<div class="t" style="right:505px;top:466.8px;font-size:12.5px;line-height:14.4px;color:#d8d9da;font-weight:normal;">7%</div>
<div class="t" style="left:551px;width:1000px;text-align:center;top:265.6px;font-size:14.5px;line-height:16.7px;color:#d8d9da;font-weight:normal;-webkit-text-stroke:0.7px #d8d9da">Registrations Per CLIENT</div>
<div class="p" style="background:#7eb26d;left:794px;top:504.5px;width:13px;height:4px;border-radius:1px"></div>
<div class="t" style="left:815.3px;top:498.8px;font-size:12.5px;line-height:14.4px;color:#d8d9da;font-weight:normal;">account</div>
<div class="p" style="background:#232325;left:793px;top:516.8px;width:420px;height:21px"></div>
<div class="p" style="background:#eab839;left:794px;top:525.8px;width:13px;height:4px;border-radius:1px"></div>
<div class="t" style="left:815.3px;top:520.0px;font-size:12.5px;line-height:14.4px;color:#d8d9da;font-weight:normal;">cuzo</div>
<div class="p" style="background:#6ed0e0;left:794px;top:547.1px;width:13px;height:4px;border-radius:1px"></div>
<div class="t" style="left:815.3px;top:541.4px;font-size:12.5px;line-height:14.4px;color:#d8d9da;font-weight:normal;">geep</div>
<div class="p" style="background:#222224;left:49px;top:614.5px;width:108px;height:24px"></div>
<div class="t" style="left:0;top:600px;width:157px;height:80px;overflow:hidden">
<div class="p" style="background:#7eb26d;left:60px;top:27.0px;width:14px;height:4px;border-radius:1px"></div>
<div class="t" style="left:82.3px;top:19.8px;font-size:12.5px;line-height:14px">Internal-Users</div>
<div class="p" style="background:#eab839;left:60px;top:51.0px;width:14px;height:4px;border-radius:1px"></div>
<div class="t" style="left:82.3px;top:43.8px;font-size:12.5px;line-height:14px">belgium-external</div>
</div>
<div class="t" style="left:258px;width:1000px;text-align:center;top:583.9px;font-size:14.9px;line-height:17.1px;color:#d8d9da;font-weight:normal;-webkit-text-stroke:0.7px #d8d9da">Login Errors on realm belgium-external</div>
<div class="t" style="right:997px;top:610.8px;font-size:12.5px;line-height:14.4px;color:#d8d9da;font-weight:normal;">100</div>
<div class="t" style="right:997px;top:666.2px;font-size:12.5px;line-height:14.4px;color:#d8d9da;font-weight:normal;">80</div>
<div class="t" style="right:997px;top:722.8px;font-size:12.5px;line-height:14.4px;color:#d8d9da;font-weight:normal;">60</div>
<div class="p" style="background:#222224;left:1077.5px;top:634.5px;width:140px;height:23px"></div>
<div class="p" style="background:#7eb26d;left:1089px;top:645.0px;width:14px;height:4px;border-radius:2px"></div>
<div class="t" style="left:1110.6px;top:638.8px;font-size:12.5px;line-height:14.4px;color:#d8d9da;font-weight:normal;">invalid_user_credentials</div>
<div class="p" style="background:#eab839;left:1089px;top:669.0px;width:14px;height:4px;border-radius:2px"></div>
<div class="t" style="left:1110.6px;top:662.8px;font-size:12.5px;line-height:14.4px;color:#d8d9da;font-weight:normal;">user_not_found</div>
<div class="p" style="background:#222224;left:1077.5px;top:682.5px;width:140px;height:23px"></div>
<div class="p" style="background:#6ed0e0;left:1089px;top:693.0px;width:14px;height:4px;border-radius:2px"></div>
<div class="t" style="left:1110.6px;top:686.8px;font-size:12.5px;line-height:14.4px;color:#d8d9da;font-weight:normal;">invalid_redirect_uri</div>
<div class="p" style="background:#ef843c;left:1089px;top:717.0px;width:14px;height:4px;border-radius:2px"></div>
<div class="t" style="left:1110.6px;top:710.8px;font-size:12.5px;line-height:14.4px;color:#d8d9da;font-weight:normal;">invalid_request</div>
<div class="p" style="background:#222224;left:1077.5px;top:730.5px;width:140px;height:23px"></div>
<div class="p" style="background:#e24d42;left:1089px;top:741.0px;width:14px;height:4px;border-radius:2px"></div>
<div class="t" style="left:1110.6px;top:734.8px;font-size:12.5px;line-height:14.4px;color:#d8d9da;font-weight:normal;">invalid_user_credentials</div>
<div class="p" style="background:#1f78c1;left:1089px;top:765.0px;width:14px;height:4px;border-radius:2px"></div>
<div class="t" style="left:1110.6px;top:758.8px;font-size:12.5px;line-height:14.4px;color:#d8d9da;font-weight:normal;">user_not_found</div>
</div></div></body></html>
